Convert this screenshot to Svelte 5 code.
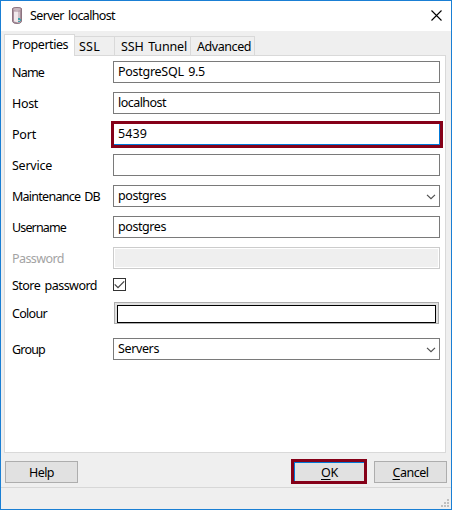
<script>
  const rows = [
    { label: 'Name', lw: 31, value: 'PostgreSQL 9.5', vw: 86, kind: 'text', h: 31 },
    { label: 'Host', lw: 25, value: 'localhost', vw: 47, kind: 'text', h: 31 },
    { label: 'Port', lw: 23, value: '5439', vw: 28, kind: 'focus', h: 31 },
    { label: 'Service', lw: 39, value: '', vw: 0, kind: 'text', h: 31 },
    { label: 'Maintenance DB', lw: 87, value: 'postgres', vw: 47, kind: 'combo', h: 31 },
    { label: 'Username', lw: 53, value: 'postgres', vw: 47, kind: 'text', h: 31 },
    { label: 'Password', lw: 51, value: '', vw: 0, kind: 'disabled', h: 27 },
    { label: 'Store password', lw: 84, value: '', vw: 0, kind: 'check', h: 28 },
    { label: 'Colour', lw: 34, value: '', vw: 0, kind: 'colour', h: 36 },
    { label: 'Group', lw: 32, value: 'Servers', vw: 40, kind: 'combo', h: 22 },
  ];
  const tabs = [
    { name: 'SSL', w: 40, tw: 20 },
    { name: 'SSH Tunnel', w: 76, tw: 65 },
    { name: 'Advanced', w: 64, tw: 53 },
  ];

  // Tracks a caption so that it fills the given width in pixels.
  function fit(node, width) {
    const count = node.textContent.length;
    if (!width || !count) return;
    node.style.wordSpacing = '1.5px';
    const gap = (width + 1 - node.getBoundingClientRect().width) / count;
    node.style.letterSpacing = gap.toFixed(3) + 'px';
  }
</script>

<div class="window">
  <header>
    <svg class="db" width="11" height="17" viewBox="0 0 11 17">
      <path d="M.5 1.5Q1 .5 5 .5T9.5 1.5V14.5Q9 16.5 5 16.5T.5 14.5Z" fill="#a88f9c" stroke="#8b7480" />
      <path d="M2 4.5H6V15.5L2 14.5Z" fill="#f0e9ec" />
      <path d="M6 4.5H8V15.5H6Z" fill="#cfc0c7" />
      <ellipse cx="5" cy="2.5" rx="3.6" ry="1.4" fill="#c9b8c0" />
      <path d="M6 11h2v2H6zM8 12h1v2H8zM6 14h2v1H6z" fill="#3fa3ab" />
    </svg>
    <span class="title" use:fit={84}>Server localhost</span>
    <svg class="close" width="11" height="11" viewBox="0 0 11 11">
      <path d="M.5.5l10 10M10.5.5l-10 10" stroke="#000" stroke-width="1.1" />
    </svg>
  </header>

  <nav>
    <div class="tab active"><span use:fit={55}>Properties</span></div>
    {#each tabs as t}
      <div class="tab" style:width="{t.w}px"><span use:fit={t.tw}>{t.name}</span></div>
    {/each}
  </nav>

  <main>
    {#each rows as r}
      <div class="row" style:height="{r.h}px">
        <div class="label {r.kind}"><span use:fit={r.lw}>{r.label}</span></div>
        <div class="field {r.kind}">
          {#if r.value}<span use:fit={r.vw}>{r.value}</span>{/if}
          {#if r.kind === 'combo'}
            <svg class="arrow" width="10" height="6" viewBox="0 0 10 6">
              <path d="M1 .9L5 4.7L9 .9" fill="none" stroke="#505050" stroke-width="1.2" />
            </svg>
          {:else if r.kind === 'check'}
            <svg width="11" height="11" viewBox="0 0 11 11">
              <path d="M.7 5.4L4 8.7L10.2 2.4" fill="none" stroke="#444" stroke-width="1.3" />
            </svg>
          {/if}
        </div>
      </div>
    {/each}
  </main>

  <div class="actions">
    <div class="btn"><span use:fit={24}>Help</span></div>
    <div class="btn ok"><span use:fit={16}><u>O</u>K</span></div>
    <div class="btn"><span use:fit={35}><u>C</u>ancel</span></div>
  </div>

  <footer>
    <svg width="8" height="8" viewBox="0 0 8 8" fill="#bfbfbf">
      <path d="M6 0h2v2H6zM3 3h2v2H3zM6 3h2v2H6zM0 6h2v2H0zM3 6h2v2H3zM6 6h2v2H6z" />
    </svg>
  </footer>
</div>

<style>
  .window {
    box-sizing: border-box;
    width: 452px;
    height: 510px;
    border: 1px solid #1a7fd4;
    background: #efefef;
    display: flex;
    flex-direction: column;
    font: 12.5px/20px 'Noto Sans', sans-serif;
    color: #000;
    white-space: pre;
  }
  .window * { box-sizing: border-box; }
  span { display: inline-block; }
  svg { display: block; flex: none; }
  header {
    height: 30px;
    flex: none;
    background: #fff;
    display: flex;
    align-items: flex-start;
    padding: 5px 9px 0 11px;
  }
  .db { margin-top: 1px; }
  .title { margin-left: 7px; }
  .close { margin: 4px 0 0 auto; }
  nav {
    height: 24px;
    flex: none;
    display: flex;
    align-items: flex-end;
    padding-left: 3px;
  }
  .tab {
    height: 19px;
    border: 1px solid #d9d9d9;
    border-width: 1px 1px 0 0;
    padding-left: 6px;
  }
  .tab:nth-child(2) { padding-left: 4px; }
  .tab.active {
    width: 71px;
    height: 22px;
    margin-bottom: -1px;
    border-left-width: 1px;
    background: #fff;
    padding-left: 7px;
    z-index: 1;
  }
  main {
    flex: none;
    width: 442px;
    height: 398px;
    margin-left: 3px;
    border: 1px solid #d9d9d9;
    background: #fff;
    padding: 5px 5px 0 7px;
  }
  .row { display: flex; }
  .label { width: 101px; flex: none; line-height: 24px; }
  .label.disabled { color: #a3a3a3; }
  .label.check { line-height: 23px; }
  .field {
    width: 327px;
    height: 22px;
    border: 1px solid #7a7a7a;
    padding-left: 4px;
    display: flex;
    align-items: flex-start;
  }
  .arrow { margin: 8px 3px 0 auto; }
  .field.focus {
    border: 1px solid #0078d7;
    border-width: 0 1px 1px 0;
    outline: 3px solid #850018;
    width: 326px;
    height: 21px;
    margin: 1px 0 0 1px;
  }
  .field.disabled {
    border-color: #ccc;
    background: #efefef;
    box-shadow: inset 0 0 0 1px #fff;
  }
  .field.check {
    width: 13px;
    height: 13px;
    margin-top: 4px;
    padding: 0;
    border-color: #333;
  }
  .field.colour {
    width: 325px;
    margin-left: 1px;
    border-color: #adadad;
    background: #e1e1e1;
    padding: 2px;
  }
  .field.colour::before {
    content: '';
    flex: 1;
    height: 16px;
    border: 1px solid #000;
    background: #fff;
  }
  .actions {
    height: 34px;
    flex: none;
    display: flex;
    padding: 8px 4px 0 4px;
  }
  .btn {
    width: 73px;
    height: 22px;
    border: 1px solid #adadad;
    background: #e1e1e1;
    text-align: center;
    line-height: 22px;
  }
  .btn.ok {
    width: 70px;
    height: 19px;
    margin: 1px 10px 0 auto;
    border: 1px solid #0078d7;
    border-width: 1px 0 0 1px;
    outline: 3px solid #850018;
    line-height: 20px;
  }
  u { text-decoration-thickness: 1px; text-underline-offset: 2px; }
  footer {
    flex: 1;
    border-top: 1px solid #d7d7d7;
    display: flex;
    justify-content: flex-end;
    align-items: flex-end;
    padding: 0 2px 2px 0;
  }
</style>
